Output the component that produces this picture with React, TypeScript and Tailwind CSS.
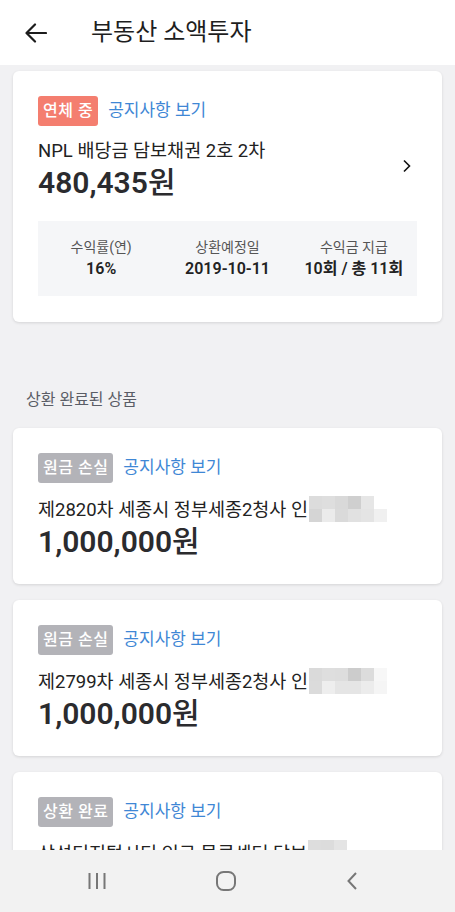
import React from "react";

const FONT = { fontFamily: 'Roboto, "Noto Sans CJK KR", "Noto Sans", sans-serif' };

function Blur({ top, bottom }: { top: string[]; bottom: string[] }) {
  return (
    <span className="inline-flex flex-col align-middle ml-[1px] -mt-[2px]">
      <span className="flex">
        {top.map((c, i) => (
          <span key={i} className="w-[13px] h-[13px]" style={{ background: c }} />
        ))}
      </span>
      <span className="flex">
        {bottom.map((c, i) => (
          <span key={i} className="w-[13px] h-[13px]" style={{ background: c }} />
        ))}
      </span>
    </span>
  );
}

function Badge({ text, color }: { text: string; color: string }) {
  return (
    <span
      className={`inline-flex items-center h-[30px] px-[5px] rounded-[3px] text-white text-[16px] font-medium tracking-[0.5px] ${color}`}
    >
      {text}
    </span>
  );
}

function Notice() {
  return <span className="text-[17px] text-[#3f87d5] ml-[10px]">공지사항 보기</span>;
}

function DoneCard({
  badge,
  title,
  amount,
  blurTop,
  blurBottom,
}: {
  badge: string;
  title: string;
  amount?: string;
  blurTop: string[];
  blurBottom: string[];
}) {
  return (
    <div className="bg-white rounded-[6px] shadow-[0_1px_3px_rgba(0,0,0,0.12)] px-[25px] pt-[25px] pb-[25px]">
      <div className="flex items-center">
        <Badge text={badge} color="bg-[#b3b3b8]" />
        <Notice />
      </div>
      <div className="mt-[14px] text-[18.5px] leading-[26px] text-[#222] whitespace-nowrap flex items-center">
        <span>{title}</span>
        <Blur top={blurTop} bottom={blurBottom} />
      </div>
      {amount && (
        <div className="text-[30px] font-semibold leading-[34px] text-[#2b2b2e] mt-[2px]">
          1,000,000<span className="font-medium">원</span>
        </div>
      )}
    </div>
  );
}

export default function App() {
  return (
    <div className="w-[455px] h-[912px] flex flex-col bg-[#f1f1f3] overflow-hidden" style={FONT}>
      <header className="h-[65px] shrink-0 bg-white flex items-center">
        <svg width="22" height="20" viewBox="0 0 22 20" className="ml-[25px]" fill="none">
          <path d="M21 10H2M10 1.5L1.5 10L10 18.5" stroke="#1c1c1c" strokeWidth="2.2" strokeLinecap="round" strokeLinejoin="round" />
        </svg>
        <h1 className="ml-[44px] text-[24px] text-[#1e1e1e] font-normal -mt-[2px]">부동산 소액투자</h1>
      </header>

      <main className="flex-1 overflow-hidden px-[13px] pt-[6px]">
        <div className="bg-white rounded-[6px] shadow-[0_1px_3px_rgba(0,0,0,0.12)] px-[25px] pt-[25px] pb-[26px]">
          <div className="flex items-center">
            <Badge text="연체 중" color="bg-[#f47e6f]" />
            <Notice />
          </div>
          <div className="flex items-center justify-between">
            <div>
              <div className="mt-[12px] text-[18.5px] leading-[26px] text-[#222]">NPL 배당금 담보채권 2호 2차</div>
              <div className="text-[30px] font-semibold leading-[34px] text-[#2b2b2e] mt-[2px]">
                480,435<span className="font-medium">원</span>
              </div>
            </div>
            <svg width="10" height="14" viewBox="0 0 10 14" className="mr-[5px] mt-[6px]" fill="none">
              <path d="M2 1.5L7.5 7L2 12.5" stroke="#111" strokeWidth="1.6" />
            </svg>
          </div>
          <div className="mt-[21px] h-[75px] bg-[#f5f6f8] grid grid-cols-3 items-center text-center">
            <div className="flex flex-col items-center">
              <span className="text-[14px] leading-[20px] text-[#555]">수익률(연)</span>
              <span className="text-[16px] leading-[23px] font-semibold text-[#222]">16%</span>
            </div>
            <div className="flex flex-col items-center">
              <span className="text-[14px] leading-[20px] text-[#555]">상환예정일</span>
              <span className="text-[16px] leading-[23px] font-semibold text-[#222]">2019-10-11</span>
            </div>
            <div className="flex flex-col items-center">
              <span className="text-[14px] leading-[20px] text-[#555]">수익금 지급</span>
              <span className="text-[16px] leading-[23px] font-semibold text-[#222]">10회 / 총 11회</span>
            </div>
          </div>
        </div>

        <div className="mt-[66px] ml-[13px] text-[16px] text-[#5a5d66]">상환 완료된 상품</div>

        <div className="mt-[16px] flex flex-col gap-[16px]">
          <DoneCard
            badge="원금 손실"
            title="제2820차 세종시 정부세종2청사 인"
            amount="1"
            blurTop={["#dcdcdc", "#dedede", "#d9d9d9", "#cfcfcf", "#e6e6e6"]}
            blurBottom={["#d5d5d5", "#ebebeb", "#dadada", "#e1e1e1", "#e4e4e4", "#f0f0f0"]}
          />
          <DoneCard
            badge="원금 손실"
            title="제2799차 세종시 정부세종2청사 인"
            amount="1"
            blurTop={["#dadada", "#dedede", "#dddddd", "#cccccc", "#dcdcdc", "#f7f7f7"]}
            blurBottom={["#dbdbdb", "#eeeeee", "#e5e5e5", "#e5e5e5", "#ececec", "#f5f5f5"]}
          />
          <DoneCard
            badge="상환 완료"
            title="삼성디지털시티 인근 물류센터 담보"
            blurTop={["#dddddd", "#dcdcdc", "#e4e4e4"]}
            blurBottom={["#e2e2e2", "#e0e0e0", "#e8e8e8"]}
          />
        </div>
      </main>

      <nav className="h-[62px] shrink-0 bg-[#f2f2f2] flex items-center">
        <div className="ml-[77px] w-[40px] flex justify-center">
          <svg width="20" height="20" viewBox="0 0 20 20">
            <path d="M2.5 2v16M10 2v16M17.5 2v16" stroke="#777" strokeWidth="2" />
          </svg>
        </div>
        <div className="ml-[89px] w-[40px] flex justify-center">
          <svg width="22" height="22" viewBox="0 0 22 22" fill="none">
            <rect x="2" y="2" width="18" height="18" rx="6.5" stroke="#777" strokeWidth="2" />
          </svg>
        </div>
        <div className="ml-[86px] w-[40px] flex justify-center">
          <svg width="14" height="22" viewBox="0 0 14 22" fill="none">
            <path d="M11 3L3.5 11L11 19" stroke="#777" strokeWidth="2" />
          </svg>
        </div>
      </nav>
    </div>
  );
}
